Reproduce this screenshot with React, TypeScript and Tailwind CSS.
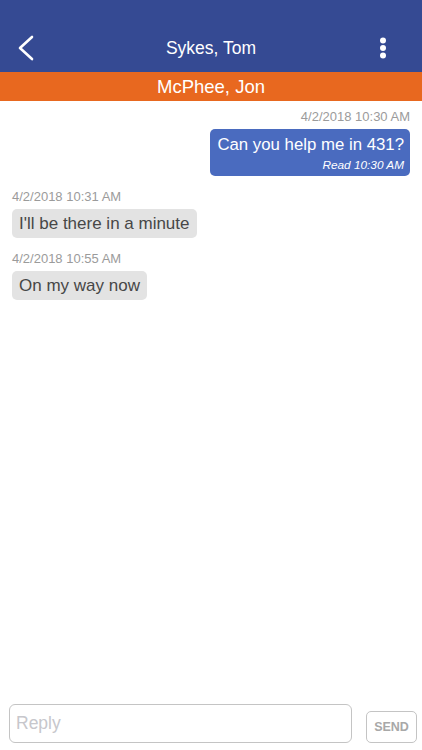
import React from "react";

const font = { fontFamily: '"Liberation Sans", Arial, sans-serif' };

export default function App() {
  return (
    <div className="flex h-[750px] w-[422px] flex-col bg-white" style={font}>
      <div className="flex h-[72px] items-end bg-[#354a93] pb-[0px]">
        <div className="flex h-[48px] w-full items-center">
          <div className="flex w-[60px] items-center pl-[17px]">
            <svg width="18" height="26" viewBox="0 0 18 26">
              <path d="M15 2 L3 13 L15 24" fill="none" stroke="#fff" strokeWidth="2.6" strokeLinecap="round" strokeLinejoin="round" />
            </svg>
          </div>
          <div className="flex-1 text-center text-[17.5px] text-white">Sykes, Tom</div>
          <div className="flex w-[60px] justify-end pr-[35px]">
            <svg width="8" height="22" viewBox="0 0 8 22">
              <circle cx="4" cy="3.5" r="3" fill="#fff" />
              <circle cx="4" cy="11" r="3" fill="#fff" />
              <circle cx="4" cy="18.5" r="3" fill="#fff" />
            </svg>
          </div>
        </div>
      </div>
      <div className="flex h-[29px] items-center justify-center bg-[#e8681f] text-[18.5px] text-white">
        McPhee, Jon
      </div>
      <div className="flex flex-1 flex-col px-[12px] pt-[8px]">
        <div className="flex flex-col items-end">
          <div className="text-[13px] leading-[16px] text-[#9b9b9b]">4/2/2018 10:30 AM</div>
          <div className="mt-[4px] flex flex-col items-end rounded-[5px] bg-[#4a6bbf] px-[6px] pl-[7px] pt-[5px] pb-[3px] text-white">
            <div className="text-[16.8px] leading-[22px]">Can you help me in 431?</div>
            <div className="mt-[1px] text-[11.8px] italic leading-[16px]">Read 10:30 AM</div>
          </div>
        </div>
        <div className="mt-[13px] flex flex-col items-start">
          <div className="text-[13px] leading-[16px] text-[#9b9b9b]">4/2/2018 10:31 AM</div>
          <div className="mt-[4px] rounded-[5px] bg-[#e3e3e3] px-[7px] py-[4px] text-[17px] leading-[21px] text-[#474747]">
            I'll be there in a minute
          </div>
        </div>
        <div className="mt-[13px] flex flex-col items-start">
          <div className="text-[13px] leading-[16px] text-[#9b9b9b]">4/2/2018 10:55 AM</div>
          <div className="mt-[4px] rounded-[5px] bg-[#e3e3e3] px-[7px] py-[4px] text-[17px] leading-[21px] text-[#474747]">
            On my way now
          </div>
        </div>
      </div>
      <div className="flex items-end pb-[7px] pl-[9px] pr-[5px]">
        <div className="flex h-[39px] w-[343px] items-center rounded-[6px] border border-[#c4c4c4] px-[6px] text-[17.5px] text-[#c7c7cc]">
          Reply
        </div>
        <div className="ml-[14px] flex h-[32px] w-[51px] items-center justify-center rounded-[5px] border border-[#c4c4c4] text-[12.5px] font-bold text-[#a8a8a8]">
          SEND
        </div>
      </div>
    </div>
  );
}
